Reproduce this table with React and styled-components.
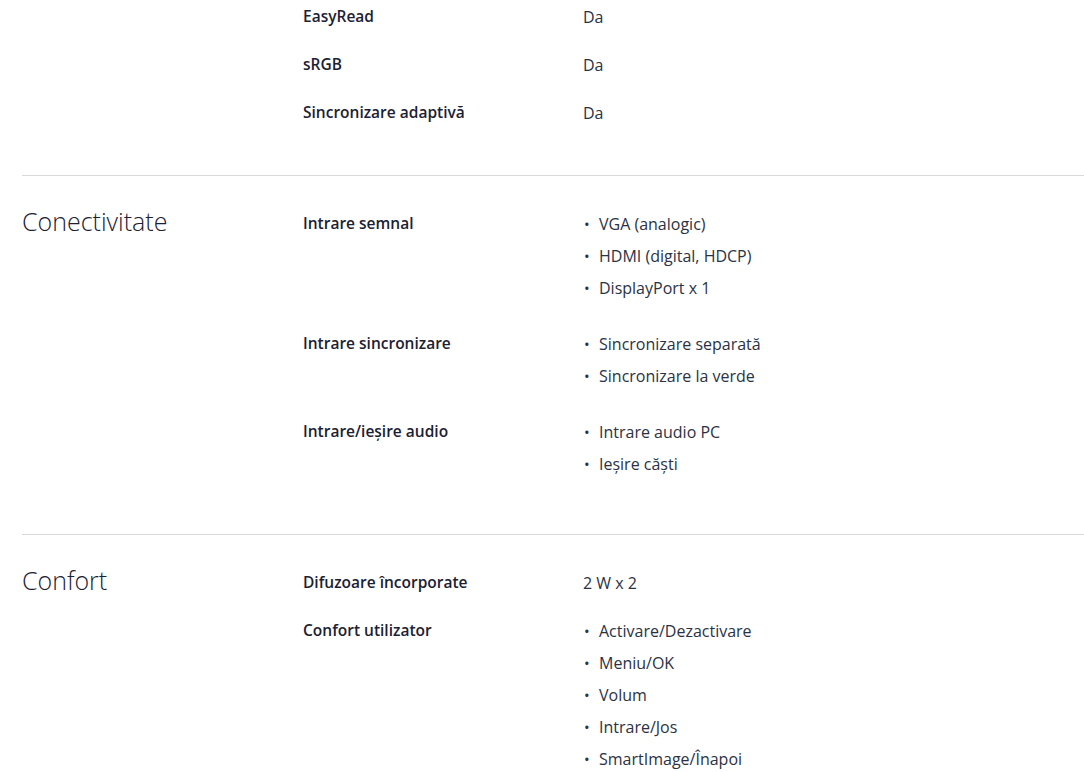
import React from "react";
import styled, { createGlobalStyle } from "styled-components";

const GlobalStyle = createGlobalStyle`
  html, body {
    margin: 0;
    padding: 0;
    background: #ffffff;
  }
  body {
    font-family: "Open Sans", "Noto Sans", sans-serif;
    color: #1b2133;
    -webkit-font-smoothing: antialiased;
  }
`;

const Page = styled.div`
  padding-left: 22px;
  width: 1062px;
`;

const Section = styled.section`
  display: grid;
  grid-template-columns: 281px 280px 1fr;
  padding: ${(p) => (p.$first ? "0" : "31px")} 0 31px;
  border-top: ${(p) => (p.$first ? "none" : "1px solid #d9d9d9")};
`;

const Heading = styled.h2`
  grid-column: 1;
  grid-row: 1 / span 20;
  align-self: start;
  margin: 0;
  font-size: 25px;
  line-height: 29px;
  font-weight: 300;
  color: #1b2133;
`;

const Label = styled.div`
  grid-column: 2;
  font-size: 15.5px;
  line-height: 32px;
  font-weight: 600;
  color: #1b2133;
  padding-bottom: 16px;
`;

const Value = styled.div`
  grid-column: 3;
  font-size: 16px;
  line-height: 32px;
  font-weight: 400;
  color: #2b3245;
  padding-top: 1px;
  padding-bottom: ${(p) => (p.$list ? "23px" : "15px")};
`;

const List = styled.ul`
  list-style: none;
  margin: 0;
  padding: 0;
`;

const Item = styled.li`
  position: relative;
  padding-left: 16px;
  line-height: 32px;

  &::before {
    content: "•";
    position: absolute;
    left: 1px;
    top: 0;
    font-size: 15px;
    color: #2b3245;
  }
`;

const sections = [
  {
    rows: [
      ["EasyRead", "Da"],
      ["sRGB", "Da"],
      ["Sincronizare adaptivă", "Da"],
    ],
  },
  {
    title: "Conectivitate",
    rows: [
      ["Intrare semnal", ["VGA (analogic)", "HDMI (digital, HDCP)", "DisplayPort x 1"]],
      ["Intrare sincronizare", ["Sincronizare separată", "Sincronizare la verde"]],
      ["Intrare/ieșire audio", ["Intrare audio PC", "Ieșire căști"]],
    ],
  },
  {
    title: "Confort",
    rows: [
      ["Difuzoare încorporate", "2 W x 2"],
      [
        "Confort utilizator",
        ["Activare/Dezactivare", "Meniu/OK", "Volum", "Intrare/Jos", "SmartImage/Înapoi"],
      ],
    ],
  },
];

export default function App() {
  return (
    <>
      <GlobalStyle />
      <Page>
        {sections.map((s, i) => (
          <Section key={i} $first={i === 0}>
            {s.title && <Heading>{s.title}</Heading>}
            {s.rows.map(([label, value]) => (
              <React.Fragment key={label}>
                <Label>{label}</Label>
                {Array.isArray(value) ? (
                  <Value $list>
                    <List>
                      {value.map((v) => (
                        <Item key={v}>{v}</Item>
                      ))}
                    </List>
                  </Value>
                ) : (
                  <Value>{value}</Value>
                )}
              </React.Fragment>
            ))}
          </Section>
        ))}
      </Page>
    </>
  );
}
